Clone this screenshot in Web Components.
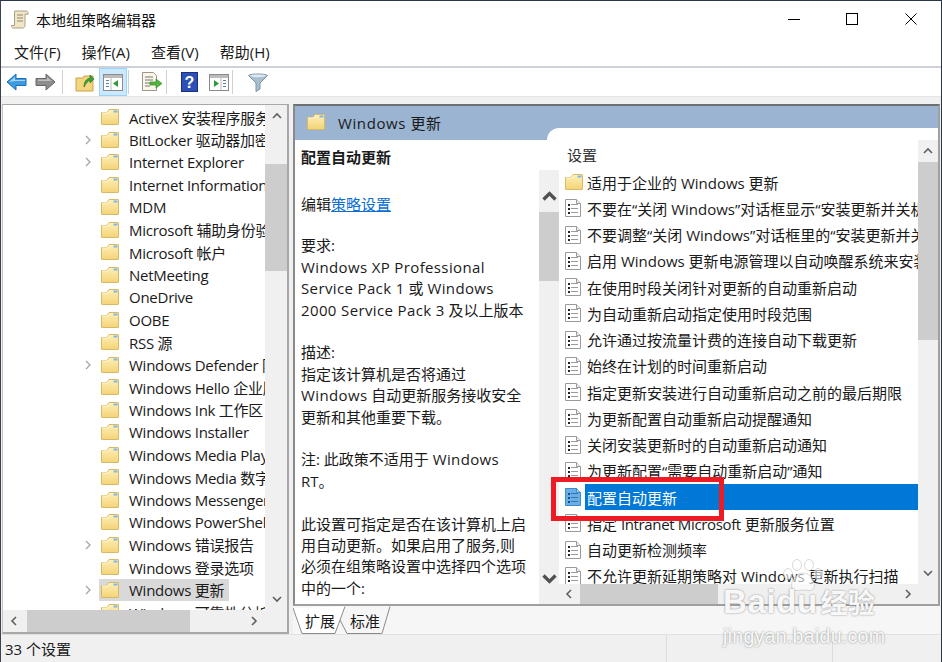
<!DOCTYPE html>
<html lang="zh-CN">
<head>
<meta charset="utf-8">
<title>本地组策略编辑器</title>
<style>
  html, body { margin: 0; padding: 0; background: #f0f0f0; overflow: hidden; }
  body { font: 15px "Open Sans", "Noto Sans CJK SC", sans-serif; color: #1a1a1a; }
  a { color: #0a6fd0; }
  /* 라틴 문자만 자간 보정 */
  gpe-description i { font-style: normal; letter-spacing: .37px; }
  gpe-setting i { font-style: normal; letter-spacing: -.35px; }
</style>
</head>
<body>
<gpe-window>
  <gpe-titlebar slot="top">本地组策略编辑器</gpe-titlebar>
  <gpe-menubar slot="top">
    <span>文件(F)</span><span>操作(A)</span><span>查看(V)</span><span>帮助(H)</span>
  </gpe-menubar>
  <gpe-toolbar slot="top"></gpe-toolbar>

  <gpe-tree slot="left">
    <gpe-tree-item>ActiveX 安装程序服务</gpe-tree-item>
    <gpe-tree-item arrow>BitLocker 驱动器加密</gpe-tree-item>
    <gpe-tree-item arrow>Internet Explorer</gpe-tree-item>
    <gpe-tree-item>Internet Information Services</gpe-tree-item>
    <gpe-tree-item>MDM</gpe-tree-item>
    <gpe-tree-item>Microsoft 辅助身份验证因素</gpe-tree-item>
    <gpe-tree-item>Microsoft 帐户</gpe-tree-item>
    <gpe-tree-item>NetMeeting</gpe-tree-item>
    <gpe-tree-item>OneDrive</gpe-tree-item>
    <gpe-tree-item>OOBE</gpe-tree-item>
    <gpe-tree-item>RSS 源</gpe-tree-item>
    <gpe-tree-item arrow>Windows Defender 防病毒程序</gpe-tree-item>
    <gpe-tree-item>Windows Hello 企业版</gpe-tree-item>
    <gpe-tree-item>Windows Ink 工作区</gpe-tree-item>
    <gpe-tree-item>Windows Installer</gpe-tree-item>
    <gpe-tree-item>Windows Media Player</gpe-tree-item>
    <gpe-tree-item>Windows Media 数字权限管理</gpe-tree-item>
    <gpe-tree-item>Windows Messenger</gpe-tree-item>
    <gpe-tree-item>Windows PowerShell</gpe-tree-item>
    <gpe-tree-item arrow>Windows 错误报告</gpe-tree-item>
    <gpe-tree-item>Windows 登录选项</gpe-tree-item>
    <gpe-tree-item arrow selected>Windows 更新</gpe-tree-item>
    <gpe-tree-item>Windows 可靠性分析</gpe-tree-item>
  </gpe-tree>

  <gpe-detail slot="right" heading="Windows 更新">
    <gpe-description slot="description">
      <b>配置自动更新</b>
      <p class="edit">编辑<a href="#">策略设置</a></p>
      <p class="req">要求:<br><i>Windows XP Professional</i><br><i>Service Pack 1</i> 或 <i>Windows</i><br><i>2000 Service Pack 3</i> 及以上版本</p>
      <p>描述:<br>指定该计算机是否将通过<br><i>Windows</i> 自动更新服务接收安全<br>更新和其他重要下载。</p>
      <p>注: 此政策不适用于 <i>Windows</i><br>RT。</p>
      <p>此设置可指定是否在该计算机上启<br>用自动更新。如果启用了服务,则<br>必须在组策略设置中选择四个选项<br>中的一个:</p>
    </gpe-description>
    <gpe-setting-list slot="list">
      <gpe-setting folder>适用于企业的 Windows 更新</gpe-setting>
      <gpe-setting>不要在“关闭 Windows”对话框显示“安装更新并关机</gpe-setting>
      <gpe-setting>不要调整“关闭 Windows”对话框里的“安装更新并关机</gpe-setting>
      <gpe-setting>启用 Windows 更新电源管理以自动唤醒系统来安装计划的更新</gpe-setting>
      <gpe-setting>在使用时段关闭针对更新的自动重新启动</gpe-setting>
      <gpe-setting>为自动重新启动指定使用时段范围</gpe-setting>
      <gpe-setting>允许通过按流量计费的连接自动下载更新</gpe-setting>
      <gpe-setting>始终在计划的时间重新启动</gpe-setting>
      <gpe-setting>指定更新安装进行自动重新启动之前的最后期限</gpe-setting>
      <gpe-setting>为更新配置自动重新启动提醒通知</gpe-setting>
      <gpe-setting>关闭安装更新时的自动重新启动通知</gpe-setting>
      <gpe-setting>为更新配置“需要自动重新启动”通知</gpe-setting>
      <gpe-setting selected>配置自动更新</gpe-setting>
      <gpe-setting>指定 <i>Intranet Microsoft</i> 更新服务位置</gpe-setting>
      <gpe-setting>自动更新检测频率</gpe-setting>
      <gpe-setting>不允许更新延期策略对 Windows 更新执行扫描</gpe-setting>
    </gpe-setting-list>
  </gpe-detail>

  <gpe-statusbar slot="bottom">33 个设置</gpe-statusbar>
  <gpe-highlight slot="overlay"></gpe-highlight>
  <gpe-watermark slot="overlay"></gpe-watermark>
</gpe-window>

<script>
  const FONT = '"Open Sans", "Noto Sans CJK SC", sans-serif';

  // 아이콘은 전부 인라인 SVG
  const folderSvg = `
    <svg width="18" height="16" viewBox="0 0 18 16">
      <defs><linearGradient id="fg" x1="0" y1="0" x2="0" y2="1">
        <stop offset="0" stop-color="#fdf0b8"/><stop offset="1" stop-color="#f4d377"/></linearGradient></defs>
      <path d="M.5 3.5V15c0 .3.2.5.5.5h16c.3 0 .5-.2.5-.5V1c0-.3-.2-.5-.5-.5H8L6 3.5z" fill="url(#fg)" stroke="#d9b866"/>
      <rect x="12.5" y="1.5" width="4" height="2" fill="#7db7e8"/>
      <path d="M1 4h6l2-3" fill="none" stroke="#fff8d8"/>
    </svg>`;
  const policySvg = (selected) => `
    <svg width="16" height="18" viewBox="0 0 16 18">
      <path d="M.5.5h11l4 4v13H.5z" fill="${selected ? '#6aaee4' : '#fff'}" stroke="${selected ? '#3d8cd0' : '#9a9a9a'}"/>
      <path d="M11.5.5v4h4" fill="${selected ? '#9ccbef' : '#eee'}" stroke="${selected ? '#3d8cd0' : '#9a9a9a'}"/>
      <g fill="${selected ? '#0f4f8f' : '#222'}">
        <rect x="3" y="5" width="2" height="2"/><rect x="3" y="9" width="2" height="2"/><rect x="3" y="13" width="2" height="2"/>
      </g>
      <g fill="${selected ? '#2f76b8' : '#9a9a9a'}">
        <rect x="6" y="5" width="7" height="1"/><rect x="6" y="9" width="7" height="1"/><rect x="6" y="13" width="7" height="1"/>
      </g>
    </svg>`;
  const chevron = (dir, size = 10, color = '#606060', sw = 1.6) => {
    const paths = { up: 'M1 7l4-4 4 4', down: 'M1 3l4 4 4-4', left: 'M7 1L3 5l4 4', right: 'M3 1l4 4-4 4' };
    return `<svg width="${size}" height="${size}" viewBox="0 0 10 10"><path d="${paths[dir]}" fill="none" stroke="${color}" stroke-width="${sw}"/></svg>`;
  };

  class GpeWindow extends HTMLElement {
    constructor() {
      super();
      this.attachShadow({ mode: 'open' });
      this.shadowRoot.innerHTML = `
        <style>
          :host { display: flex; flex-direction: column; position: relative; box-sizing: border-box;
                  width: 942px; height: 662px; background: #f0f0f0; overflow: hidden;
                  border-top: 1px solid #2b3648; border-left: 1px solid #3a4350; border-right: 1px solid #2b3648; }
          .panes { display: flex; flex: none; height: 530px; gap: 4px; padding-left: 1px; }
        </style>
        <slot name="top"></slot>
        <div class="panes"><slot name="left"></slot><slot name="right"></slot></div>
        <slot name="bottom"></slot>
        <slot name="overlay"></slot>`;
    }
  }

  class GpeTitlebar extends HTMLElement {
    constructor() {
      super();
      this.attachShadow({ mode: 'open' });
      this.shadowRoot.innerHTML = `
        <style>
          :host { display: flex; align-items: center; height: 38px; background: #fff; color: #111;
                  font: 15px ${FONT}; padding-left: 10px; padding-bottom: 2px; box-sizing: border-box; }
          .name { margin-left: 7px; flex: 1; }
          .ctl { width: 58.500px; display: flex; justify-content: center; }
          .ctls { display: flex; margin-right: 1px; }
        </style>
        <svg width="18" height="19" viewBox="0 0 18 19">
          <path d="M3.500 1h11.500c1.200 0 2 .9 2 1.800v1.400h-3V15.500c0 1.500-1 2.500-2.500 2.500H2.500C1.200 18 .5 17 .5 15.500h3z" fill="#f1e6c4" stroke="#a8a08a"/>
          <path d="M6 5h6M6 8h6M6 11h6" stroke="#8d877a"/>
        </svg>
        <span class="name"><slot></slot></span>
        <div class="ctls">
          <div class="ctl"><svg width="12" height="12"><path d="M0 6.500h12" stroke="#000"/></svg></div>
          <div class="ctl"><svg width="12" height="12"><rect x=".5" y=".5" width="11" height="11" fill="none" stroke="#000"/></svg></div>
          <div class="ctl"><svg width="12" height="12"><path d="M.5.5l11 11M11.500.5l-11 11" stroke="#000"/></svg></div>
        </div>`;
    }
  }

  class GpeMenubar extends HTMLElement {
    constructor() {
      super();
      this.attachShadow({ mode: 'open' });
      this.shadowRoot.innerHTML = `
        <style>
          :host { display: flex; gap: 21px; align-items: center; height: 27px; padding: 0 0 2px 13px;
                  background: #fff; color: #1a1a1a; font: 15px ${FONT}; box-sizing: border-box; }
        </style>
        <slot></slot>`;
    }
  }

  class GpeToolbar extends HTMLElement {
    constructor() {
      super();
      this.attachShadow({ mode: 'open' });
      this.shadowRoot.innerHTML = `
        <style>
          :host { display: block; background: #fff; border-top: 2px solid #cdd2d8; }
          .bar { display: flex; align-items: center; height: 28px; padding-left: 1px; }
          .band { height: 8px; background: #f0f0f0; border-top: 1px solid #e4e4e4; box-sizing: border-box; }
          .btn { width: 28px; height: 28px; display: flex; align-items: center; justify-content: center; box-sizing: border-box; flex: none; }
          .btn.on { background: #cce8ff; border: 1px solid #99d1ff; }
          .sep { width: 1px; height: 24px; background: #d0d0d0; flex: none; }
        </style>
        <div class="bar">
          <div class="btn" style="width:29px"><svg width="21" height="18" viewBox="0 0 21 18">
            <path d="M1 9l9-8v4.500h10v7H10V17z" fill="#3d9be0" stroke="#1a6fb8"/><path d="M3 9l6-5v3h10v1H9z" fill="#a5d6f7"/></svg></div>
          <div class="btn" style="width:29px"><svg width="21" height="18" viewBox="0 0 21 18">
            <path d="M20 9l-9-8v4.500H1v7h10V17z" fill="#8d8d8d" stroke="#666"/><path d="M3 6.500h9V4l5 4H3z" fill="#bdbdbd"/></svg></div>
          <div class="sep" style="margin-left:2px;margin-right:8px"></div>
          <div class="btn"><svg width="20" height="20" viewBox="0 0 20 20">
            <path d="M1 6h7l1-2h9v15H1z" fill="#f3d67e" stroke="#c8a24c"/>
            <path d="M9 15c0-5 2-8 6-9V3l4 4-4 4V8c-2 1-4 3-6 7z" fill="#3aa33a" stroke="#257a25" stroke-width=".7"/></svg></div>
          <div class="btn on"><svg width="20" height="17" viewBox="0 0 20 17">
            <rect x=".5" y=".5" width="19" height="16" fill="#fff" stroke="#8b8b8b"/><rect x="1" y="1" width="18" height="3" fill="#bcbcbc"/>
            <path d="M3 6h3v1H3zM3 9h3v1H3zM3 12h3v1H3z" fill="#5a7fa5"/><path d="M8 4v12" stroke="#bbb"/><path d="M15 6v7l-5-3.500z" fill="#2e9a3e"/></svg></div>
          <div class="sep" style="margin:0 9px 0 1px"></div>
          <div class="btn"><svg width="22" height="20" viewBox="0 0 22 20">
            <path d="M1.500.5h11l3 3v15h-14z" fill="#fbf7e8" stroke="#9c978a"/>
            <path d="M4 5h8M4 8h8M4 11h6M4 14h5" stroke="#777"/>
            <path d="M9 10h6V7l6 4.500-6 4.500v-3H9z" fill="#53b53f" stroke="#36892a" stroke-width=".7"/></svg></div>
          <div class="sep" style="margin:0 8px 0 0"></div>
          <div class="btn"><svg width="17" height="20" viewBox="0 0 17 20">
            <rect x=".5" y=".5" width="16" height="19" fill="#2c50b4" stroke="#1b2f80"/>
            <text x="8.500" y="15.500" text-anchor="middle" font-family="Liberation Sans, sans-serif" font-size="16" font-weight="700" fill="#fff">?</text></svg></div>
          <div class="btn" style="margin-left:2px"><svg width="20" height="17" viewBox="0 0 20 17">
            <rect x=".5" y=".5" width="19" height="16" fill="#fff" stroke="#8b8b8b"/><rect x="1" y="1" width="18" height="3" fill="#bcbcbc"/>
            <path d="M14 6h3v1h-3zM14 9h3v1h-3zM14 12h3v1h-3z" fill="#5a7fa5"/><path d="M12 4v12" stroke="#bbb"/><path d="M5 6v7l5-3.500z" fill="#2e9a3e"/></svg></div>
          <div class="sep" style="margin:0 11px 0 -1px"></div>
          <div class="btn"><svg width="20" height="19" viewBox="0 0 20 19">
            <path d="M.5 2.500C3 .5 17 .5 19.500 2.500L12 10v6l-4 2.500V10z" fill="#a9bfd0" stroke="#7c93a6"/>
            <ellipse cx="10" cy="2.800" rx="8" ry="1.400" fill="#dfe9f0"/></svg></div>
        </div>
        <div class="band"></div>`;
    }
  }

  class GpeScrollbar extends HTMLElement {
    constructor() {
      super();
      this.attachShadow({ mode: 'open' });
    }

    connectedCallback() {
      const vertical = this.getAttribute('orient') !== 'h';
      const start = this.getAttribute('start') || 0;
      const size = this.getAttribute('size') || 0;
      const arrow = this.getAttribute('arrow') || 20;
      const strong = this.hasAttribute('strong');
      const stroke = strong ? ['#505050', 2.2] : ['#606060', 1.6];
      const icon = strong ? 15 : 10;
      this.shadowRoot.innerHTML = `
        <style>
          :host { display: flex; flex: none; flex-direction: ${vertical ? 'column' : 'row'}; background: #f0f0f0;
                  ${vertical ? `width: ${this.getAttribute('thick') || 20}px` : `height: ${this.getAttribute('thick') || 20}px`}; }
          .a { flex: none; display: flex; align-items: center; justify-content: center;
               ${vertical ? `height: ${arrow}px` : `width: ${arrow}px`}; }
          .t { flex: 1; min-width: 0; min-height: 0; }
          .th { background: #cdcdcd; ${vertical ? `margin-top: ${start}px; height: ${size}px` : `margin-left: ${start}px; width: ${size}px; height: 100%`}; }
          ${strong ? '.a.first svg { transform: translateY(5px); } .a.last svg { transform: translateY(-5px); }' : ''}
        </style>
        <div class="a first">${chevron(vertical ? 'up' : 'left', icon, stroke[0], stroke[1])}</div>
        <div class="t"><div class="th"></div></div>
        <div class="a last">${chevron(vertical ? 'down' : 'right', icon, stroke[0], stroke[1])}</div>`;
    }
  }

  class GpeTree extends HTMLElement {
    constructor() {
      super();
      this.attachShadow({ mode: 'open' });
      this.shadowRoot.innerHTML = `
        <style>
          :host { display: grid; grid-template-columns: 262px 23px; grid-template-rows: 1fr 22px; flex: none;
                  width: 287px; box-sizing: border-box; background: #fff; overflow: hidden;
                  border-top: 1px solid #a8a8a8; border-left: 1px solid #c4c4c4;
                  border-right: 2px solid #a8a8a8; border-bottom: 2px solid #a8a8a8; }
          .rows { overflow: hidden; padding-top: 1px; }
          .corner { background: #f0f0f0; }
        </style>
        <div class="rows"><slot></slot></div>
        <gpe-scrollbar arrow="22" thick="23" start="37" size="107"></gpe-scrollbar>
        <gpe-scrollbar orient="h" arrow="22" thick="22" start="2" size="163"></gpe-scrollbar>
        <div class="corner"></div>`;
    }
  }

  class GpeTreeItem extends HTMLElement {
    constructor() {
      super();
      this.attachShadow({ mode: 'open' });
    }

    connectedCallback() {
      const hasArrow = this.hasAttribute('arrow');
      const selected = this.hasAttribute('selected');
      this.shadowRoot.innerHTML = `
        <style>
          :host { display: flex; align-items: center; height: 22.5px; padding-left: 80px; white-space: nowrap;
                  font: 15px ${FONT}; letter-spacing: -.25px; color: #1a1a1a; }
          .arrow { width: 16px; flex: none; display: flex; }
          .row { display: flex; align-items: center; height: 100%; padding: 0 5px 0 2px; ${selected ? 'background: #d9d9d9;' : ''} }
          .row svg { flex: none; margin-right: 10px; }
        </style>
        <span class="arrow">${hasArrow ? chevron('right', 10, '#a6a6a6', 1.3) : ''}</span>
        <span class="row">${folderSvg}<slot></slot></span>`;
    }
  }

  class GpeDetail extends HTMLElement {
    constructor() {
      super();
      this.attachShadow({ mode: 'open' });
    }

    connectedCallback() {
      this.shadowRoot.innerHTML = `
        <style>
          :host { display: flex; flex-direction: column; flex: none; width: 647px; }
          .frame { flex: none; height: 502px; box-sizing: border-box; display: flex; flex-direction: column; background: #fff;
                   border-top: 2px solid #6f6f6f; border-left: 2px solid #8a8a8a; border-right: 2px solid #a0a0a0; border-bottom: 2px solid #a0a0a0; overflow: hidden; }
          .head { flex: none; height: 34px; background: #9ab4d2; display: flex; align-items: center; padding-left: 12px;
                  font: 15px ${FONT}; letter-spacing: .6px; color: #1a1a1a; position: relative; }
          .head svg { margin-right: 13px; margin-top: -2px; }
          .head span { margin-top: -1px; }
          .notch { position: absolute; right: 0; bottom: 0; left: 252px; height: 12px; background: #fff; border-top-left-radius: 12px; }
          .body { flex: 1; min-height: 0; display: flex; }
          .tabs { flex: 1; position: relative; background: #f6f6f6; }
          .tabs svg { position: absolute; left: 0; top: 0; }
          .tab { position: absolute; top: 4px; font: 15px ${FONT}; color: #1a1a1a; }
        </style>
        <div class="frame">
          <div class="head">${folderSvg}<span>${this.getAttribute('heading')}</span><div class="notch"></div></div>
          <div class="body">
            <slot name="description"></slot>
            <slot name="list"></slot>
          </div>
        </div>
        <div class="tabs">
          <svg width="110" height="28" viewBox="0 0 110 28">
            <path d="M47 14l7 13.500h35L97 .5" fill="#f6f6f6" stroke="#8a8a8a"/>
            <path d="M0 2l9 25.500h33L52 .5" fill="#fff" stroke="#8a8a8a"/>
          </svg>
          <span class="tab" style="left:12px">扩展</span>
          <span class="tab" style="left:57px">标准</span>
        </div>`;
    }
  }

  class GpeDescription extends HTMLElement {
    constructor() {
      super();
      this.attachShadow({ mode: 'open' });
      this.shadowRoot.innerHTML = `
        <style>
          :host { display: flex; flex: none; width: 264px; height: 100%; overflow: hidden; background: #fff; }
          .txt { flex: none; width: 244px; box-sizing: border-box; padding: 7px 0 0 6px; height: 100%; overflow: hidden;
                 font: 15px/21.4px ${FONT}; color: #1a1a1a; }
          ::slotted(p) { margin: 21.400px 0 0 0; }
          ::slotted(p.edit) { margin-top: 26px; }
          ::slotted(p.req) { margin-top: 19.500px; }
          ::slotted(b) { font-weight: 700; }
          ::slotted(a) { color: #0a6fd0; }
          .sb { margin-top: 30px; }
        </style>
        <div class="txt"><slot></slot></div>
        <gpe-scrollbar class="sb" strong arrow="42" start="0" size="69"></gpe-scrollbar>`;
    }
  }

  class GpeSettingList extends HTMLElement {
    constructor() {
      super();
      this.attachShadow({ mode: 'open' });
      this.shadowRoot.innerHTML = `
        <style>
          :host { display: flex; flex: 1; min-width: 0; height: 100%; background: #fff; }
          .col { flex: 1; min-width: 0; display: flex; flex-direction: column; }
          .h { flex: none; height: 29px; padding: 4px 0 0 8px; box-sizing: border-box; font: 15px ${FONT}; color: #333; }
          .rows { flex: 1; min-height: 0; overflow: hidden; padding-left: 2px; }
          .side { flex: none; display: flex; flex-direction: column; background: #f0f0f0; padding-bottom: 20px; }
          .side gpe-scrollbar { flex: 1; }
        </style>
        <div class="col">
          <div class="h">设置</div>
          <div class="rows"><slot></slot></div>
          <gpe-scrollbar orient="h" start="1" size="138"></gpe-scrollbar>
        </div>
        <div class="side"><gpe-scrollbar start="0" size="178" arrow="22"></gpe-scrollbar></div>`;
    }
  }

  class GpeSetting extends HTMLElement {
    constructor() {
      super();
      this.attachShadow({ mode: 'open' });
    }

    connectedCallback() {
      const selected = this.hasAttribute('selected');
      const icon = this.hasAttribute('folder') ? folderSvg : policySvg(selected);
      this.shadowRoot.innerHTML = `
        <style>
          :host { display: flex; align-items: center; height: 26.25px; white-space: nowrap; font: 15px ${FONT}; color: #1a1a1a; }
          .i { flex: none; width: 24px; display: flex; padding-left: 4px; box-sizing: border-box; }
          .t { flex: 1; height: 100%; display: flex; align-items: center; padding-left: 2px; white-space: pre;
               ${selected ? 'background: #0078d7; color: #fff;' : ''} }
        </style>
        <span class="i">${icon}</span><span class="t"><span><slot></slot></span></span>`;
    }
  }

  class GpeStatusbar extends HTMLElement {
    constructor() {
      super();
      this.attachShadow({ mode: 'open' });
      this.shadowRoot.innerHTML = `
        <style>
          :host { display: grid; grid-template-columns: 665px 166px 1fr; flex: 1; background: #f0f0f0;
                  font: 15px ${FONT}; color: #1a1a1a; border-top: 1px solid #e2e2e2; }
          div { padding-left: 4px; display: flex; align-items: center; }
          div + div { border-left: 1px solid #dcdcdc; }
        </style>
        <div><slot></slot></div><div></div><div></div>`;
    }
  }

  class GpeHighlight extends HTMLElement {
    constructor() {
      super();
      this.attachShadow({ mode: 'open' });
      this.shadowRoot.innerHTML = `
        <style>
          :host { position: absolute; left: 550px; top: 476px; width: 173px; height: 44px; box-sizing: border-box;
                  border: 5px solid #ed1c24; pointer-events: none; }
        </style>`;
    }
  }

  class GpeWatermark extends HTMLElement {
    constructor() {
      super();
      this.attachShadow({ mode: 'open' });
      this.shadowRoot.innerHTML = `
        <style>
          :host { position: absolute; left: 720px; top: 558px; width: 175px; height: 84px; color: rgba(255,255,255,.96);
                  font-family: "Liberation Sans", "Noto Sans CJK SC", sans-serif; pointer-events: none;
                  text-shadow: 0 0 2px rgba(90,90,90,.75); display: flex; flex-direction: column; align-items: flex-start; }
          svg { margin-left: 61px; flex: none; margin-bottom: -5px; }
          .b { font-size: 33px; font-weight: 700; line-height: 27px; margin: 0 0 0 2px; white-space: nowrap; letter-spacing: .6px; }
          .b span { font-size: 27px; margin-left: 3px; letter-spacing: 0; }
          .u { font-size: 19.500px; line-height: 22px; margin: 7px 0 0 2px; letter-spacing: .3px; white-space: nowrap; }
        </style>
        <svg width="42" height="34" viewBox="0 0 42 34" fill="rgba(255,255,255,.6)" stroke="rgba(150,150,150,.35)">
          <ellipse cx="6" cy="15" rx="4.500" ry="5.500"/><ellipse cx="15" cy="6" rx="4.500" ry="5.500"/><ellipse cx="27" cy="6" rx="4.500" ry="5.500"/><ellipse cx="36" cy="15" rx="4.500" ry="5.500"/>
          <path d="M21 14c7 0 13 8 11 15-2 4-7 2-11 2s-9 2-11-2c-2-7 4-15 11-15z"/>
        </svg>
        <div class="b">Baidu<span>经验</span></div>
        <div class="u">jingyan.baidu.com</div>`;
    }
  }

  customElements.define('gpe-window', GpeWindow);
  customElements.define('gpe-titlebar', GpeTitlebar);
  customElements.define('gpe-menubar', GpeMenubar);
  customElements.define('gpe-toolbar', GpeToolbar);
  customElements.define('gpe-scrollbar', GpeScrollbar);
  customElements.define('gpe-tree', GpeTree);
  customElements.define('gpe-tree-item', GpeTreeItem);
  customElements.define('gpe-detail', GpeDetail);
  customElements.define('gpe-description', GpeDescription);
  customElements.define('gpe-setting-list', GpeSettingList);
  customElements.define('gpe-setting', GpeSetting);
  customElements.define('gpe-statusbar', GpeStatusbar);
  customElements.define('gpe-highlight', GpeHighlight);
  customElements.define('gpe-watermark', GpeWatermark);
</script>
</body>
</html>
